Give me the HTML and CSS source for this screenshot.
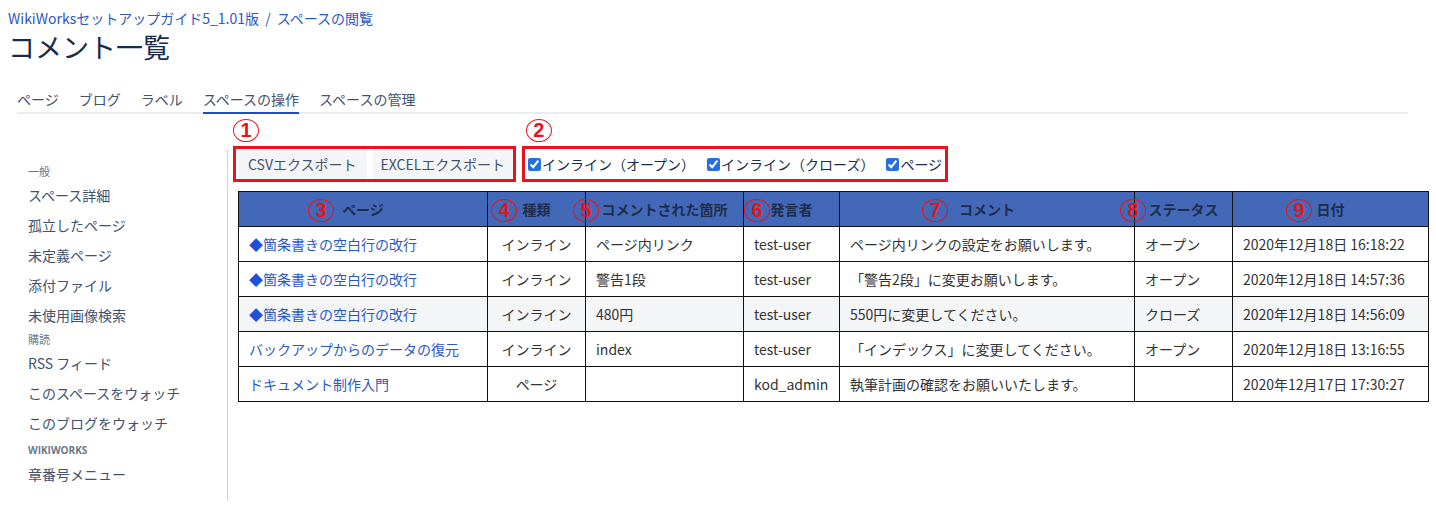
FILE: index.html
```html
<!DOCTYPE html>
<html lang="ja">
<head>
    <meta charset="UTF-8">
    <title>コメント一覧</title>
    <link rel="stylesheet" href="styles.css">
</head>
<body>
    <div class="page-header">
        <div class="breadcrumb">
            <a href="#">WikiWorksセットアップガイド5_1.01版</a>
            <span class="sep">/</span>
            <a href="#">スペースの閲覧</a>
        </div>
        <h1>コメント一覧</h1>

        <!-- タブ -->
        <div class="tabs">
            <a href="#">ページ</a>
            <a href="#">ブログ</a>
            <a href="#">ラベル</a>
            <a href="#" class="active">スペースの操作</a>
            <a href="#">スペースの管理</a>
        </div>
    </div>

    <div class="layout">
        <!-- サイドメニュー -->
        <div class="sidebar">
            <div class="side-head">一般</div>
            <a href="#">スペース詳細</a>
            <a href="#">孤立したページ</a>
            <a href="#">未定義ページ</a>
            <a href="#">添付ファイル</a>
            <a href="#">未使用画像検索</a>
            <div class="side-head">購読</div>
            <a href="#">RSS フィード</a>
            <a href="#">このスペースをウォッチ</a>
            <a href="#">このブログをウォッチ</a>
            <div class="side-head latin">WIKIWORKS</div>
            <a href="#">章番号メニュー</a>
        </div>

        <div class="main">
            <div class="toolbar">
                <div class="mark-box export-box">
                    <span class="num num-top">1</span>
                    <button>CSVエクスポート</button>
                    <button>EXCELエクスポート</button>
                </div>
                <div class="mark-box filter-box">
                    <span class="num num-top num-2">2</span>
                    <label><input type="checkbox" checked>インライン（オープン）</label>
                    <label><input type="checkbox" checked>インライン（クローズ）</label>
                    <label><input type="checkbox" checked>ページ</label>
                </div>
            </div>

            <table class="comments">
                <thead>
                    <tr>
                        <th class="c-page"><span class="num n3">3</span>ページ</th>
                        <th class="c-type"><span class="num n4">4</span>種類</th>
                        <th class="c-place"><span class="num n5">5</span>コメントされた箇所</th>
                        <th class="c-user"><span class="num n6">6</span>発言者</th>
                        <th class="c-comment"><span class="num n7">7</span>コメント</th>
                        <th class="c-status"><span class="num n8">8</span>ステータス</th>
                        <th class="c-date"><span class="num n9">9</span>日付</th>
                    </tr>
                </thead>
                <tbody>
                    <tr>
                        <td><a href="#"><span class="dia">◆</span>箇条書きの空白行の改行</a></td>
                        <td class="center">インライン</td>
                        <td>ページ内リンク</td>
                        <td>test-user</td>
                        <td>ページ内リンクの設定をお願いします。</td>
                        <td>オープン</td>
                        <td class="date">2020年12月18日 16:18:22</td>
                    </tr>
                    <tr>
                        <td><a href="#"><span class="dia">◆</span>箇条書きの空白行の改行</a></td>
                        <td class="center">インライン</td>
                        <td>警告1段</td>
                        <td>test-user</td>
                        <td>「警告2段」に変更お願いします。</td>
                        <td>オープン</td>
                        <td class="date">2020年12月18日 14:57:36</td>
                    </tr>
                    <tr class="hover">
                        <td><a href="#"><span class="dia">◆</span>箇条書きの空白行の改行</a></td>
                        <td class="center">インライン</td>
                        <td>480円</td>
                        <td>test-user</td>
                        <td>550円に変更してください。</td>
                        <td>クローズ</td>
                        <td class="date">2020年12月18日 14:56:09</td>
                    </tr>
                    <tr>
                        <td><a href="#">バックアップからのデータの復元</a></td>
                        <td class="center">インライン</td>
                        <td>index</td>
                        <td>test-user</td>
                        <td>「インデックス」に変更してください。</td>
                        <td>オープン</td>
                        <td class="date">2020年12月18日 13:16:55</td>
                    </tr>
                    <tr>
                        <td><a href="#">ドキュメント制作入門</a></td>
                        <td class="center">ページ</td>
                        <td></td>
                        <td>kod_admin</td>
                        <td>執筆計画の確認をお願いいたします。</td>
                        <td></td>
                        <td class="date">2020年12月17日 17:30:27</td>
                    </tr>
                </tbody>
            </table>
        </div>
    </div>
</body>
</html>
```

FILE: styles.css
```css
body {
    margin: 0;
    font-family: "Noto Sans CJK JP", sans-serif;
    font-size: 14px;
    color: #172b4d;
    background: #fff;
}

a {
    color: #2d58c4;
    text-decoration: none;
}

.page-header {
    padding: 8px 0 0 8px;
}

.breadcrumb {
    line-height: 20px;
    font-size: 14px;
}

.breadcrumb .sep {
    color: #2d58c4;
    margin: 0 3px;
}

h1 {
    margin: 1px 0 0;
    font-size: 27px;
    font-weight: normal;
    line-height: 36px;
    color: #172b4d;
}

.tabs {
    display: flex;
    gap: 20px;
    margin: 22px 28px 0 9px;
    border-bottom: 2px solid #ebecf0;
}

.tabs a {
    color: #42526e;
    line-height: 24px;
    padding-bottom: 1px;
    border-bottom: 2px solid transparent;
    margin-bottom: -2px;
}

.tabs a.active {
    border-bottom-color: #1d4fc4;
}

.layout {
    display: flex;
}

.sidebar {
    flex: none;
    width: 199px;
    margin: 36px 0 0 17px;
    padding: 12px 0 12px 11px;
    border-right: 1px solid #d0d0d0;
    align-self: flex-start;
}

.sidebar a {
    display: block;
    line-height: 30px;
    color: #42526e;
    white-space: nowrap;
}

.side-head {
    font-size: 11px;
    line-height: 18px;
    color: #6b778c;
}

.side-head.latin {
    padding-top: 3px;
    font-family: "Open Sans", sans-serif;
    font-weight: bold;
    font-size: 10px;
}

.main {
    flex: 1;
    padding-left: 5px;
}

.toolbar {
    display: flex;
    gap: 6px;
    padding-top: 32px;
}

.mark-box {
    position: relative;
    display: flex;
    align-items: center;
    height: 30px;
    border: 3px solid #e8141c;
}

.export-box {
    gap: 6px;
    padding: 0 0 0 2px;
}

.export-box button {
    height: 30px;
    padding: 0 10px;
    border: none;
    border-radius: 3px;
    background: #f4f5f7;
    color: #42526e;
    font-family: "Noto Sans CJK JP", sans-serif;
    font-size: 14px;
}

.export-box button + button {
    padding: 0 8px;
}

.filter-box {
    gap: 12px;
    padding: 0 3px;
}

.filter-box label {
    display: flex;
    align-items: center;
    color: #172b4d;
}

.filter-box input {
    margin: 0 1px 0 0;
    width: 13px;
    height: 13px;
    accent-color: #2a6ee0;
}

/* 赤丸の番号 */
.num {
    position: absolute;
    width: 24px;
    height: 21px;
    border: 1px solid #e8141c;
    border-radius: 50%;
    color: #e8141c;
    font-family: "Liberation Sans", sans-serif;
    font-weight: bold;
    font-size: 20px;
    line-height: 21px;
    text-align: center;
}

.num-top {
    top: -30px;
    left: -3px;
}

.num-2 {
    left: 1px;
}

.comments {
    margin: 9px 0 0 5px;
    width: 1190px;
    border-collapse: collapse;
    table-layout: fixed;
    border: 1px solid #111;
}

.comments th,
.comments td {
    border: 1px solid #111;
    height: 34px;
    padding: 0 10px;
    white-space: nowrap;
}

.comments th {
    position: relative;
    background: #4468b8;
    color: #1f2d4d;
    font-weight: bold;
    text-align: center;
}

.comments td {
    color: #333;
}

.comments td.center {
    text-align: center;
}

.comments tr.hover td {
    background: #f4f5f7;
}

.dia {
    color: #1e50d8;
}

/* 幅は padding と罫線を除いた値 */
.c-page { width: 228px; }
.c-type { width: 77px; }
.c-place { width: 137px; }
.c-user { width: 75px; }
.c-comment { width: 274px; }
.c-status { width: 77px; }
.c-date { width: 175px; }

.n3 { left: 69px; top: 7px; }
.n4 { left: 3px; top: 7px; }
.n5 { left: -13px; top: 7px; }
.n6 { left: 0; top: 7px; }
.n7 { left: 82px; top: 7px; }
.n8 { left: -15px; top: 7px; }
.n9 { left: 53px; top: 7px; }
```
